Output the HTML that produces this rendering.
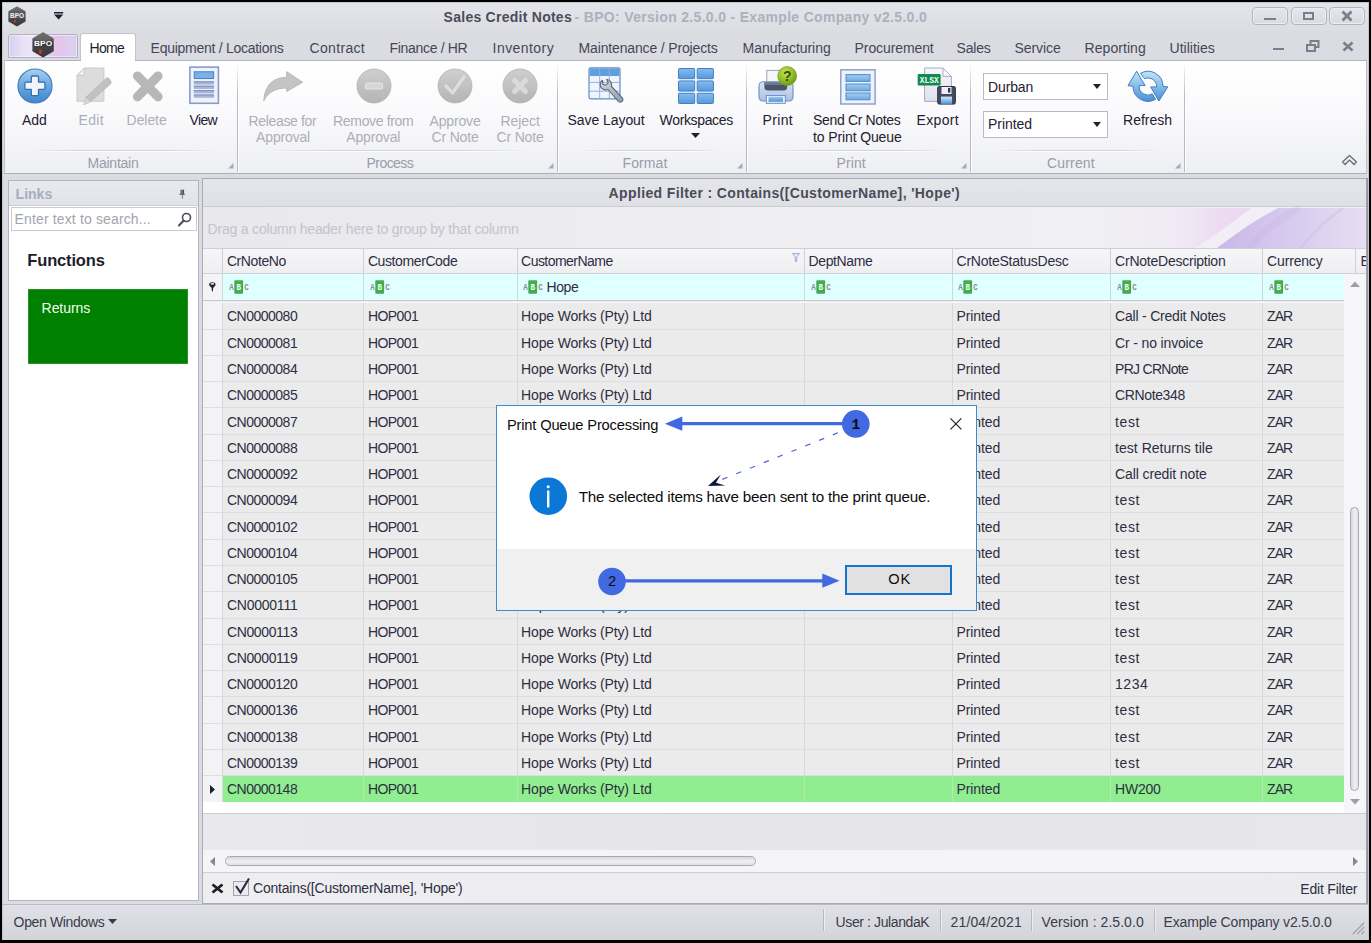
<!DOCTYPE html>
<html lang="en"><head><meta charset="utf-8"><title>Sales Credit Notes</title>
<style>
html,body{margin:0;padding:0;}
body{width:1371px;height:943px;background:#000;overflow:hidden;position:relative;font-family:"Liberation Sans",sans-serif;}
.t{position:absolute;white-space:nowrap;}
.b{position:absolute;box-sizing:border-box;}
svg{position:absolute;overflow:visible;}
</style></head><body>
<div class="b" style="left:2px;top:2px;width:1366.5px;height:938.2px;background:#dbdce2;"></div>
<div class="b" style="left:2px;top:2px;width:1366.5px;height:31px;background:linear-gradient(#e4e5ea,#dcdde3);"></div>
<div class="b" style="left:2px;top:2px;width:1366.5px;height:938.2px;border:1px solid #c4c5cc;"></div>
<div class="t" style="left:443.6px;top:6.5px;height:21px;line-height:21px;font-size:14px;color:#4b4c5a;letter-spacing:0.258px;font-weight:bold;">Sales Credit Notes</div>
<div class="t" style="left:574.6px;top:6.5px;height:21px;line-height:21px;font-size:14px;color:#adb0bd;letter-spacing:0.316px;font-weight:bold;">- BPO: Version 2.5.0.0 - Example Company v2.5.0.0</div>
<svg style="left:7.500px;top:6px" width="18" height="21" viewBox="0 0 18 21"><defs><linearGradient id="hx1" x1="0" y1="0" x2="0" y2="1"><stop offset="0" stop-color="#7a7a7d"/><stop offset="0.450" stop-color="#4b4b4e"/><stop offset="1" stop-color="#3a3a3c"/></linearGradient></defs><polygon points="9,0.300 17.600,5.300 17.600,15.500 9,20.500 0.400,15.500 0.400,5.300" fill="url(#hx1)"/><rect x="1.300" y="8" width="15.400" height="4.200" fill="#5a5a5d"/><text x="9" y="11.900" font-family="Liberation Sans, sans-serif" font-size="6.500" font-weight="bold" fill="#f2f2f4" text-anchor="middle" textLength="14" lengthAdjust="spacingAndGlyphs">BPO</text><rect x="5.800" y="13.800" width="2.200" height="2.600" fill="#c0392b"/></svg>
<svg style="left:53.800px;top:12.400px" width="9.200" height="7.600" viewBox="0 0 9.200 7.600"><rect x="0" y="0" width="9.200" height="1.500" fill="#1f2033"/><polygon points="0,2.500 9.200,2.500 4.600,7.400" fill="#1f2033"/></svg>
<div class="b" style="left:1252px;top:7px;width:36px;height:18px;border:1px solid #b4b5bf;border-radius:4px;background:linear-gradient(#e6e7ec,#d9dae1);box-shadow:inset 0 0 0 1px #ecedf1;"></div>
<div class="b" style="left:1291px;top:7px;width:36px;height:18px;border:1px solid #b4b5bf;border-radius:4px;background:linear-gradient(#e6e7ec,#d9dae1);box-shadow:inset 0 0 0 1px #ecedf1;"></div>
<div class="b" style="left:1329px;top:7px;width:36px;height:18px;border:1px solid #b4b5bf;border-radius:4px;background:linear-gradient(#e6e7ec,#d9dae1);box-shadow:inset 0 0 0 1px #ecedf1;"></div>
<div class="b" style="left:1264px;top:17.8px;width:11.5px;height:2.4px;background:#7b7c8c;"></div>
<div class="b" style="left:1303px;top:11.5px;width:11px;height:8.5px;border:2px solid #7b7c8c;"></div>
<svg style="left:1341px;top:11px" width="12" height="10" viewBox="0 0 12 10"><path d="M1.5,0.5 L10.5,9.5 M10.5,0.5 L1.5,9.5" stroke="#7b7c8c" stroke-width="2.8" fill="none"/></svg>
<div class="b" style="left:3px;top:33px;width:1365px;height:27px;background:#dbdce2;"></div>
<div class="b" style="left:8px;top:33.5px;width:70px;height:24.5px;border:1px solid #b3afc8;border-radius:3px 3px 0 0;background:linear-gradient(90deg,#d7cff0 0%,#e9e2f7 22%,#ece6f8 34%,#e6cdee 62%,#e4c3ec 72%,#dccfee 90%,#d9d0ef 100%);box-shadow:inset 0 0 0 1px rgba(255,255,255,.45);"></div>
<svg style="left:31.500px;top:32.200px" width="22.200" height="25.800" viewBox="0 0 22.200 25.800"><defs><linearGradient id="hx2" x1="0" y1="0" x2="0" y2="1"><stop offset="0" stop-color="#77777a"/><stop offset="0.400" stop-color="#4a4a4d"/><stop offset="1" stop-color="#363638"/></linearGradient></defs><polygon points="11.100,0.300 21.800,6.500 21.800,19.300 11.100,25.500 0.400,19.300 0.400,6.500" fill="url(#hx2)"/><polygon points="11.100,0.300 21.800,6.500 11.100,9.500 0.400,6.500" fill="#6b6b6e" opacity=".7"/><rect x="1.200" y="9.600" width="19.800" height="5" fill="#3c3c3f"/><text x="11.100" y="14.300" font-family="Liberation Sans, sans-serif" font-size="7.500" font-weight="bold" fill="#ffffff" text-anchor="middle" textLength="18" lengthAdjust="spacingAndGlyphs">BPO</text><rect x="7.200" y="17.800" width="2.600" height="4" fill="#c0392b"/></svg>
<div class="b" style="left:80px;top:33.3px;width:56px;height:27.7px;background:#fff;border:1px solid #c3c4cc;border-bottom:none;border-radius:3px 3px 0 0;"></div>
<div class="t" style="left:89.6px;top:37.5px;height:21px;line-height:21px;font-size:14px;color:#1e1e2a;letter-spacing:-0.748px;">Home</div>
<div class="t" style="left:150.6px;top:37.5px;height:21px;line-height:21px;font-size:14px;color:#454658;letter-spacing:-0.272px;">Equipment / Locations</div>
<div class="t" style="left:309.6px;top:37.5px;height:21px;line-height:21px;font-size:14px;color:#454658;letter-spacing:0.313px;">Contract</div>
<div class="t" style="left:389.6px;top:37.5px;height:21px;line-height:21px;font-size:14px;color:#454658;letter-spacing:-0.327px;">Finance / HR</div>
<div class="t" style="left:492.6px;top:37.5px;height:21px;line-height:21px;font-size:14px;color:#454658;letter-spacing:0.439px;">Inventory</div>
<div class="t" style="left:578.6px;top:37.5px;height:21px;line-height:21px;font-size:14px;color:#454658;letter-spacing:-0.157px;">Maintenance / Projects</div>
<div class="t" style="left:742.6px;top:37.5px;height:21px;line-height:21px;font-size:14px;color:#454658;letter-spacing:-0.051px;">Manufacturing</div>
<div class="t" style="left:854.6px;top:37.5px;height:21px;line-height:21px;font-size:14px;color:#454658;letter-spacing:-0.104px;">Procurement</div>
<div class="t" style="left:956.6px;top:37.5px;height:21px;line-height:21px;font-size:14px;color:#454658;letter-spacing:-0.230px;">Sales</div>
<div class="t" style="left:1014.6px;top:37.5px;height:21px;line-height:21px;font-size:14px;color:#454658;letter-spacing:-0.097px;">Service</div>
<div class="t" style="left:1084.6px;top:37.5px;height:21px;line-height:21px;font-size:14px;color:#454658;letter-spacing:0.050px;">Reporting</div>
<div class="t" style="left:1169.6px;top:37.5px;height:21px;line-height:21px;font-size:14px;color:#454658;letter-spacing:-0.002px;">Utilities</div>
<div class="b" style="left:1273px;top:47.8px;width:11px;height:2.2px;background:#7b7c8c;"></div>
<svg style="left:1306px;top:40px" width="14" height="12" viewBox="0 0 14 12"><rect x="4.5" y="1" width="8" height="6" fill="none" stroke="#7b7c8c" stroke-width="2"/><rect x="1" y="5" width="8" height="6" fill="#d9dae0" stroke="#7b7c8c" stroke-width="2"/></svg>
<svg style="left:1342px;top:42px" width="12" height="9" viewBox="0 0 12 9"><path d="M1.5,0.5 L10.5,8.5 M10.5,0.5 L1.5,8.5" stroke="#7b7c8c" stroke-width="2.6" fill="none"/></svg>
<div class="b" style="left:3px;top:903.5px;width:1364.5px;height:36px;background:linear-gradient(#e0e1e6,#d3d4da);border-top:1px solid #b9bac3;"></div>
<div class="t" style="left:13.6px;top:911.5px;height:21px;line-height:21px;font-size:14px;color:#3a3b4a;letter-spacing:-0.348px;">Open Windows</div>
<svg style="left:108px;top:919px" width="9" height="5" viewBox="0 0 9 5"><polygon points="0,0 9,0 4.5,5" fill="#3a3b4a"/></svg>
<div class="b" style="left:823px;top:908.5px;width:1px;height:22.5px;background:#b7b8c2;"></div>
<div class="b" style="left:824px;top:908.5px;width:1px;height:22.5px;background:#eceef2;"></div>
<div class="b" style="left:939.5px;top:908.5px;width:1px;height:22.5px;background:#b7b8c2;"></div>
<div class="b" style="left:940.5px;top:908.5px;width:1px;height:22.5px;background:#eceef2;"></div>
<div class="b" style="left:1031px;top:908.5px;width:1px;height:22.5px;background:#b7b8c2;"></div>
<div class="b" style="left:1032px;top:908.5px;width:1px;height:22.5px;background:#eceef2;"></div>
<div class="b" style="left:1153.5px;top:908.5px;width:1px;height:22.5px;background:#b7b8c2;"></div>
<div class="b" style="left:1154.5px;top:908.5px;width:1px;height:22.5px;background:#eceef2;"></div>
<div class="t" style="left:835.6px;top:911.5px;height:21px;line-height:21px;font-size:14px;color:#3a3b4a;letter-spacing:-0.393px;">User : JulandaK</div>
<div class="t" style="left:950.6px;top:911.5px;height:21px;line-height:21px;font-size:14px;color:#3a3b4a;letter-spacing:0.115px;">21/04/2021</div>
<div class="t" style="left:1041.6px;top:911.5px;height:21px;line-height:21px;font-size:14px;color:#3a3b4a;letter-spacing:0.058px;">Version : 2.5.0.0</div>
<div class="t" style="left:1163.6px;top:911.5px;height:21px;line-height:21px;font-size:14px;color:#3a3b4a;letter-spacing:-0.169px;">Example Company v2.5.0.0</div>
<svg style="left:1351px;top:920.500px" width="14" height="14" viewBox="0 0 16 16"><path d="M2,15 L15,2 M7,15 L15,7 M12,15 L15,12" stroke="#9a9ba6" stroke-width="1.3" fill="none"/></svg>
<div class="b" style="left:4px;top:60px;width:1363px;height:114px;background:linear-gradient(#ffffff 0%,#fafafc 45%,#eeeff3 100%);border:1px solid #bfc0c9;border-top:1px solid #b2b3bc;border-bottom:1px solid #adaeb8;"></div>
<div class="b" style="left:81px;top:60px;width:54px;height:1px;background:#fff;"></div>
<div class="b" style="left:237px;top:62px;width:1px;height:110px;background:linear-gradient(rgba(200,201,210,0),#b9bac4 30%,#b9bac4 100%);"></div>
<div class="b" style="left:238px;top:62px;width:1px;height:110px;background:rgba(255,255,255,.9);"></div>
<div class="b" style="left:557px;top:62px;width:1px;height:110px;background:linear-gradient(rgba(200,201,210,0),#b9bac4 30%,#b9bac4 100%);"></div>
<div class="b" style="left:558px;top:62px;width:1px;height:110px;background:rgba(255,255,255,.9);"></div>
<div class="b" style="left:746px;top:62px;width:1px;height:110px;background:linear-gradient(rgba(200,201,210,0),#b9bac4 30%,#b9bac4 100%);"></div>
<div class="b" style="left:747px;top:62px;width:1px;height:110px;background:rgba(255,255,255,.9);"></div>
<div class="b" style="left:970px;top:62px;width:1px;height:110px;background:linear-gradient(rgba(200,201,210,0),#b9bac4 30%,#b9bac4 100%);"></div>
<div class="b" style="left:971px;top:62px;width:1px;height:110px;background:rgba(255,255,255,.9);"></div>
<div class="b" style="left:1184px;top:62px;width:1px;height:110px;background:linear-gradient(rgba(200,201,210,0),#b9bac4 30%,#b9bac4 100%);"></div>
<div class="b" style="left:1185px;top:62px;width:1px;height:110px;background:rgba(255,255,255,.9);"></div>
<div class="b" style="left:30px;top:150px;width:185px;height:1px;background:linear-gradient(90deg,rgba(210,211,219,0),#d2d3db 25%,#d2d3db 75%,rgba(210,211,219,0));"></div>
<div class="b" style="left:30px;top:151px;width:185px;height:1px;background:linear-gradient(90deg,rgba(255,255,255,0),#fff 25%,#fff 75%,rgba(255,255,255,0));"></div>
<div class="b" style="left:262px;top:150px;width:270px;height:1px;background:linear-gradient(90deg,rgba(210,211,219,0),#d2d3db 25%,#d2d3db 75%,rgba(210,211,219,0));"></div>
<div class="b" style="left:262px;top:151px;width:270px;height:1px;background:linear-gradient(90deg,rgba(255,255,255,0),#fff 25%,#fff 75%,rgba(255,255,255,0));"></div>
<div class="b" style="left:582px;top:150px;width:138px;height:1px;background:linear-gradient(90deg,rgba(210,211,219,0),#d2d3db 25%,#d2d3db 75%,rgba(210,211,219,0));"></div>
<div class="b" style="left:582px;top:151px;width:138px;height:1px;background:linear-gradient(90deg,rgba(255,255,255,0),#fff 25%,#fff 75%,rgba(255,255,255,0));"></div>
<div class="b" style="left:770px;top:150px;width:176px;height:1px;background:linear-gradient(90deg,rgba(210,211,219,0),#d2d3db 25%,#d2d3db 75%,rgba(210,211,219,0));"></div>
<div class="b" style="left:770px;top:151px;width:176px;height:1px;background:linear-gradient(90deg,rgba(255,255,255,0),#fff 25%,#fff 75%,rgba(255,255,255,0));"></div>
<div class="b" style="left:996px;top:150px;width:164px;height:1px;background:linear-gradient(90deg,rgba(210,211,219,0),#d2d3db 25%,#d2d3db 75%,rgba(210,211,219,0));"></div>
<div class="b" style="left:996px;top:151px;width:164px;height:1px;background:linear-gradient(90deg,rgba(255,255,255,0),#fff 25%,#fff 75%,rgba(255,255,255,0));"></div>
<svg style="left:227.5px;top:163.200px" width="5.500" height="5.500" viewBox="0 0 7 7"><polygon points="7,0 7,7 0,7" fill="#a9aab5"/></svg>
<svg style="left:547.5px;top:163.200px" width="5.500" height="5.500" viewBox="0 0 7 7"><polygon points="7,0 7,7 0,7" fill="#a9aab5"/></svg>
<svg style="left:736.5px;top:163.200px" width="5.500" height="5.500" viewBox="0 0 7 7"><polygon points="7,0 7,7 0,7" fill="#a9aab5"/></svg>
<svg style="left:960.5px;top:163.200px" width="5.500" height="5.500" viewBox="0 0 7 7"><polygon points="7,0 7,7 0,7" fill="#a9aab5"/></svg>
<svg style="left:1174.5px;top:163.200px" width="5.500" height="5.500" viewBox="0 0 7 7"><polygon points="7,0 7,7 0,7" fill="#a9aab5"/></svg>
<svg style="left:17.400px;top:68.300px" width="36" height="36" viewBox="0 0 36 36">
<defs><linearGradient id="ga" x1="0" y1="0" x2="0" y2="1"><stop offset="0" stop-color="#a9d0f0"/><stop offset="0.450" stop-color="#6eaae0"/><stop offset="1" stop-color="#3f86cc"/></linearGradient></defs>
<circle cx="18" cy="18" r="17" fill="url(#ga)" stroke="#3d7fc2" stroke-width="1.200"/>
<path d="M14.300,9.200 Q14.300,8 15.500,8 H20.300 Q21.500,8 21.500,9.200 V14.200 H26.700 Q27.900,14.200 27.900,15.400 V20.200 Q27.900,21.400 26.700,21.400 H21.500 V26.400 Q21.500,27.600 20.300,27.600 H15.500 Q14.300,27.600 14.300,26.400 V21.400 H9.100 Q7.900,21.400 7.900,20.200 V15.400 Q7.900,14.200 9.100,14.200 H14.300 Z" fill="#f1f5fb" stroke="#356fae" stroke-width="1.300" stroke-linejoin="round"/>
</svg>
<svg style="left:75px;top:66px" width="37" height="40" viewBox="0 0 37 40">
<path d="M9.500,2 H28.900 V35.300 H2 V9.500 Z" fill="#dcdcdc" stroke="#cacaca" stroke-width="1"/>
<path d="M2,9.500 H9.500 V2 Z" fill="#ededed" stroke="#cacaca" stroke-width="1"/>
<path d="M31.500,12 Q33,11.500 34.300,12.800 L36,15.500 Q36.500,17 35.500,18 L15,36 L8.800,38.700 L10.800,31.500 Z" fill="#c1c1c1" stroke="#b6b6b6" stroke-width="0.800"/>
<path d="M8.800,38.700 L10.800,31.500 L15,36 Z" fill="#d6d6d6"/>
</svg>
<svg style="left:131px;top:70px" width="33" height="33" viewBox="0 0 33 33">
<path d="M6.500,6 L27,26.800 M27,6 L6.500,26.800" fill="none" stroke="#b7b7b7" stroke-width="9.200" stroke-linecap="round"/>
</svg>
<svg style="left:189px;top:66px" width="31" height="39" viewBox="0 0 31 39">
<rect x="0.900" y="1.100" width="28.500" height="36.200" fill="#eef2fb" stroke="#8a9bcb" stroke-width="1.600"/>
<rect x="5.300" y="5.800" width="19.300" height="6.700" fill="#7ab2e6" stroke="#4a86c8" stroke-width="1.100"/>
<g fill="#aab5d8"><rect x="4.800" y="15.300" width="20.300" height="3.300"/><rect x="4.800" y="19.700" width="20.300" height="3.300"/><rect x="4.800" y="24.100" width="20.300" height="3.300"/><rect x="4.800" y="28.500" width="20.300" height="3.300"/></g>
<g fill="#7d8dc0"><rect x="4.800" y="15.300" width="20.300" height="1"/><rect x="4.800" y="19.700" width="20.300" height="1"/><rect x="4.800" y="24.100" width="20.300" height="1"/><rect x="4.800" y="28.500" width="20.300" height="1"/></g>
</svg>
<div class="t" style="left:22.1px;top:110px;height:21px;line-height:21px;font-size:14px;color:#1f2030;letter-spacing:-0.155px;">Add</div>
<div class="t" style="left:78.6px;top:110px;height:21px;line-height:21px;font-size:14px;color:#adaeb8;letter-spacing:0.325px;">Edit</div>
<div class="t" style="left:126.6px;top:110px;height:21px;line-height:21px;font-size:14px;color:#adaeb8;letter-spacing:-0.074px;">Delete</div>
<div class="t" style="left:189.6px;top:110px;height:21px;line-height:21px;font-size:14px;color:#1f2030;letter-spacing:-0.664px;">View</div>
<div class="t" style="left:87.6px;top:152.5px;height:21px;line-height:21px;font-size:14px;color:#9a9cab;letter-spacing:-0.260px;">Maintain</div>
<svg style="left:262px;top:70px" width="43" height="32" viewBox="0 0 43 32">
<path d="M24.700,1.700 L40.600,12.200 L24.700,21.500 L24.700,18 C14,18 6,22 1.800,30.800 C3,14 12,7.500 24.700,7.500 Z" fill="#c4c4c4" stroke="#b9b9b9" stroke-width="1" stroke-linejoin="round"/>
</svg>
<svg style="left:356px;top:68px" width="36" height="36" viewBox="0 0 36 36"><defs><linearGradient id="gdminus" x1="0" y1="0" x2="0" y2="1"><stop offset="0" stop-color="#cfcfcf"/><stop offset="1" stop-color="#b4b4b4"/></linearGradient></defs><circle cx="18" cy="18" r="17" fill="url(#gdminus)" stroke="#b3b3b3" stroke-width="0.800"/><rect x="9.5" y="15" width="17" height="6" rx="1.5" fill="#d6d6d6" stroke="#e3e3e3" stroke-width="1.2"/></svg>
<svg style="left:437px;top:68px" width="36" height="36" viewBox="0 0 36 36"><defs><linearGradient id="gdcheck" x1="0" y1="0" x2="0" y2="1"><stop offset="0" stop-color="#cfcfcf"/><stop offset="1" stop-color="#b4b4b4"/></linearGradient></defs><circle cx="18" cy="18" r="17" fill="url(#gdcheck)" stroke="#b3b3b3" stroke-width="0.800"/><path d="M9,18 L15.500,25 L27,9" fill="none" stroke="#dedede" stroke-width="3.2" stroke-linecap="round" stroke-linejoin="round"/></svg>
<svg style="left:502px;top:68px" width="36" height="36" viewBox="0 0 36 36"><defs><linearGradient id="gdx" x1="0" y1="0" x2="0" y2="1"><stop offset="0" stop-color="#cfcfcf"/><stop offset="1" stop-color="#b4b4b4"/></linearGradient></defs><circle cx="18" cy="18" r="17" fill="url(#gdx)" stroke="#b3b3b3" stroke-width="0.800"/><path d="M12.500,12.500 L23.500,23.500 M23.500,12.500 L12.500,23.500" fill="none" stroke="#dadada" stroke-width="5" stroke-linecap="round"/></svg>
<div class="t" style="left:248.6px;top:110.5px;height:21px;line-height:21px;font-size:14px;color:#adaeb8;letter-spacing:-0.349px;">Release for</div>
<div class="t" style="left:256.1px;top:127px;height:21px;line-height:21px;font-size:14px;color:#adaeb8;letter-spacing:-0.165px;">Approval</div>
<div class="t" style="left:333.1px;top:110.5px;height:21px;line-height:21px;font-size:14px;color:#adaeb8;letter-spacing:-0.342px;">Remove from</div>
<div class="t" style="left:346.3px;top:127px;height:21px;line-height:21px;font-size:14px;color:#adaeb8;letter-spacing:-0.165px;">Approval</div>
<div class="t" style="left:429.6px;top:110.5px;height:21px;line-height:21px;font-size:14px;color:#adaeb8;letter-spacing:-0.174px;">Approve</div>
<div class="t" style="left:431.6px;top:127px;height:21px;line-height:21px;font-size:14px;color:#adaeb8;letter-spacing:-0.189px;">Cr Note</div>
<div class="t" style="left:500.4px;top:110.5px;height:21px;line-height:21px;font-size:14px;color:#adaeb8;letter-spacing:-0.017px;">Reject</div>
<div class="t" style="left:496.6px;top:127px;height:21px;line-height:21px;font-size:14px;color:#adaeb8;letter-spacing:-0.189px;">Cr Note</div>
<div class="t" style="left:366.6px;top:152.5px;height:21px;line-height:21px;font-size:14px;color:#9a9cab;letter-spacing:-0.579px;">Process</div>
<svg style="left:588px;top:67px" width="38" height="38" viewBox="0 0 38 38">
<defs><linearGradient id="gw" x1="0" y1="0" x2="1" y2="1"><stop offset="0" stop-color="#d3dae3"/><stop offset="1" stop-color="#8f9bab"/></linearGradient></defs>
<rect x="1" y="0.800" width="31" height="31" rx="1.800" fill="#f0f5fc" stroke="#5f88c4" stroke-width="1.200"/>
<path d="M1.600,2.600 Q1.600,1.400 2.800,1.400 H30.200 Q31.400,1.400 31.400,2.600 V8.900 H1.600 Z" fill="#5e9fe0"/>
<path d="M1,15.400 H32 M1,24.200 H32 M11.700,1 V31.800 M21.300,1 V31.800" stroke="#8fb0dc" stroke-width="1" fill="none"/>
<path d="M14.600,13.300 C11,15.600 11.400,21.300 16.300,22.600 C17.800,23 19.200,22.800 20,22.500 L30.400,34.300 C32.800,36.800 36.600,33.300 34.300,30.800 L23.500,19.500 C24.300,16.500 22.500,12.600 18.600,12.200 L20.300,15.800 L17.300,18.300 L14.800,16.900 Z" fill="url(#gw)" stroke="#5d6a7c" stroke-width="1.100" stroke-linejoin="round"/>
</svg>
<svg style="left:678px;top:67.900px" width="36" height="36" viewBox="0 0 36 36"><defs><linearGradient id="gc" x1="0" y1="0" x2="0" y2="1"><stop offset="0" stop-color="#86bcec"/><stop offset="1" stop-color="#5899dc"/></linearGradient></defs><rect x="0.5" y="0.5" width="16.200" height="10.200" rx="0.800" fill="url(#gc)" stroke="#3f80c6" stroke-width="1"/><rect x="19.2" y="0.5" width="16.200" height="10.200" rx="0.800" fill="url(#gc)" stroke="#3f80c6" stroke-width="1"/><rect x="0.5" y="12.9" width="16.200" height="10.200" rx="0.800" fill="url(#gc)" stroke="#3f80c6" stroke-width="1"/><rect x="19.2" y="12.9" width="16.200" height="10.200" rx="0.800" fill="url(#gc)" stroke="#3f80c6" stroke-width="1"/><rect x="0.5" y="25.3" width="16.200" height="10.200" rx="0.800" fill="url(#gc)" stroke="#3f80c6" stroke-width="1"/><rect x="19.2" y="25.3" width="16.200" height="10.200" rx="0.800" fill="url(#gc)" stroke="#3f80c6" stroke-width="1"/></svg>
<div class="t" style="left:567.6px;top:110px;height:21px;line-height:21px;font-size:14px;color:#1f2030;letter-spacing:-0.073px;">Save Layout</div>
<div class="t" style="left:659.6px;top:110px;height:21px;line-height:21px;font-size:14px;color:#1f2030;letter-spacing:-0.352px;">Workspaces</div>
<svg style="left:691px;top:133px" width="9" height="5" viewBox="0 0 9 5"><polygon points="0,0 9,0 4.500,5" fill="#20212f"/></svg>
<div class="t" style="left:622.6px;top:152.5px;height:21px;line-height:21px;font-size:14px;color:#9a9cab;letter-spacing:0.092px;">Format</div>
<svg style="left:758px;top:66px" width="41" height="39" viewBox="0 0 41 39">
<defs><linearGradient id="gp" x1="0" y1="0" x2="0" y2="1"><stop offset="0" stop-color="#d8e4f4"/><stop offset="1" stop-color="#a9c1e4"/></linearGradient>
<radialGradient id="gq" cx="40%" cy="32%" r="70%"><stop offset="0" stop-color="#c6e35a"/><stop offset="0.600" stop-color="#8fbf22"/><stop offset="1" stop-color="#6a9a14"/></radialGradient>
<linearGradient id="gpp" x1="0" y1="0" x2="0" y2="1"><stop offset="0" stop-color="#9cc8f0"/><stop offset="1" stop-color="#4e92d8"/></linearGradient></defs>
<rect x="8.800" y="4.400" width="14" height="13" fill="#f4f6fa" stroke="#9aa7bd" stroke-width="1"/>
<rect x="1" y="15.700" width="34" height="19.300" rx="4" fill="url(#gp)" stroke="#6c8dc2" stroke-width="1.100"/>
<path d="M6.400,16.500 H29.200 V21 Q29.200,24.500 25.500,24.500 H10 Q6.400,24.500 6.400,21 Z" fill="#4b5468"/>
<path d="M6.400,16.500 H29.200 V19 H6.400 Z" fill="#6e778b"/>
<rect x="8.300" y="29.600" width="19" height="7.700" fill="#f1f5fb" stroke="#6c8dc2" stroke-width="1"/>
<rect x="10.500" y="30.800" width="14.600" height="5" fill="url(#gpp)"/>
<circle cx="29.200" cy="10" r="9.400" fill="url(#gq)" stroke="#7aa51c" stroke-width="0.800"/>
<text x="29.200" y="15" font-family="Liberation Sans, sans-serif" font-size="14" font-weight="bold" fill="#3c4a12" text-anchor="middle">?</text>
</svg>
<svg style="left:840px;top:68.600px" width="37" height="37" viewBox="0 0 37 37">
<defs><linearGradient id="gs" x1="0" y1="0" x2="0" y2="1"><stop offset="0" stop-color="#a5cdf0"/><stop offset="1" stop-color="#6fa9e2"/></linearGradient></defs>
<rect x="0.800" y="0.800" width="34.300" height="34.200" fill="#eef2fb" stroke="#8a9bcb" stroke-width="1.400"/>
<rect x="6" y="5.600" width="24" height="6.800" fill="url(#gs)" stroke="#4d8ccc" stroke-width="1"/>
<rect x="6" y="15" width="24" height="6.800" fill="url(#gs)" stroke="#4d8ccc" stroke-width="1"/>
<rect x="6" y="24" width="24" height="6.800" fill="url(#gs)" stroke="#4d8ccc" stroke-width="1"/>
</svg>
<svg style="left:916px;top:66px" width="42" height="40" viewBox="0 0 42 40">
<defs><linearGradient id="ge" x1="0" y1="0" x2="0" y2="1"><stop offset="0" stop-color="#f6f7fa"/><stop offset="1" stop-color="#dde1ea"/></linearGradient>
<linearGradient id="gf" x1="0" y1="0" x2="0" y2="1"><stop offset="0" stop-color="#d6e8f8"/><stop offset="1" stop-color="#4f94da"/></linearGradient></defs>
<path d="M8.600,2 H27 L35.400,10.400 V35.400 H8.600 Z" fill="url(#ge)" stroke="#a3adc4" stroke-width="1"/>
<path d="M27,2 V10.400 H35.400 Z" fill="#fff" stroke="#a3adc4" stroke-width="1"/>
<rect x="1.700" y="8.100" width="22.900" height="11.300" rx="1" fill="#0f8a50"/>
<text x="13.200" y="17.300" font-family="Liberation Mono,monospace" font-size="9.500" font-weight="bold" fill="#fff" text-anchor="middle" textLength="19" lengthAdjust="spacingAndGlyphs">XLSX</text>
<rect x="21.700" y="20.500" width="17.700" height="17.600" rx="1.500" fill="#424b5f" stroke="#2e3648" stroke-width="1"/>
<rect x="25.500" y="21" width="10" height="7" fill="#edf0f5"/>
<rect x="32" y="22" width="2.300" height="4.600" fill="#2e3648"/>
<rect x="25" y="30.600" width="11" height="7.300" fill="url(#gf)"/>
</svg>
<div class="t" style="left:762.6px;top:110px;height:21px;line-height:21px;font-size:14px;color:#1f2030;letter-spacing:0.328px;">Print</div>
<div class="t" style="left:813.1px;top:110px;height:21px;line-height:21px;font-size:14px;color:#1f2030;letter-spacing:-0.352px;">Send Cr Notes</div>
<div class="t" style="left:813.1px;top:126.5px;height:21px;line-height:21px;font-size:14px;color:#1f2030;letter-spacing:-0.129px;">to Print Queue</div>
<div class="t" style="left:916.6px;top:110px;height:21px;line-height:21px;font-size:14px;color:#1f2030;letter-spacing:0.328px;">Export</div>
<div class="t" style="left:836.6px;top:152.5px;height:21px;line-height:21px;font-size:14px;color:#9a9cab;letter-spacing:0.078px;">Print</div>
<div class="b" style="left:983px;top:73px;width:125px;height:27px;background:#fff;border:1px solid #b8bac4;"></div>
<div class="b" style="left:983px;top:110.5px;width:125px;height:27px;background:#fff;border:1px solid #b8bac4;"></div>
<svg style="left:1093px;top:84px" width="8" height="5" viewBox="0 0 8 5"><polygon points="0,0 8,0 4,5" fill="#20212f"/></svg>
<svg style="left:1093px;top:121.5px" width="8" height="5" viewBox="0 0 8 5"><polygon points="0,0 8,0 4,5" fill="#20212f"/></svg>
<div class="t" style="left:988.1px;top:76.5px;height:21px;line-height:21px;font-size:14px;color:#1f2030;letter-spacing:-0.163px;">Durban</div>
<div class="t" style="left:988.1px;top:114px;height:21px;line-height:21px;font-size:14px;color:#1f2030;letter-spacing:-0.076px;">Printed</div>
<svg style="left:1127px;top:69px" width="42" height="34" viewBox="0 0 42 34">
<defs><linearGradient id="gr" x1="0" y1="0" x2="0" y2="1"><stop offset="0" stop-color="#c4e2f6"/><stop offset="0.500" stop-color="#86bde8"/><stop offset="1" stop-color="#4a90d4"/></linearGradient></defs>
<path d="M13.500,4.300 A15,15 0 0 1 36,17.300 L40.800,17.900 L31.900,32 L23.700,17.900 L29.800,17.900 A8.800,8.800 0 0 0 17.600,9.700 Z" fill="url(#gr)" stroke="#3f7fc2" stroke-width="1" stroke-linejoin="round"/>
<path d="M28.500,30.300 A15,15 0 0 1 6,17.300 L1,16.600 L9.600,2.200 L18.100,16.600 L12.200,16.600 A8.800,8.800 0 0 0 25.400,24.900 Z" fill="url(#gr)" stroke="#3f7fc2" stroke-width="1" stroke-linejoin="round"/>
</svg>
<div class="t" style="left:1123.1px;top:110.3px;height:21px;line-height:21px;font-size:14px;color:#1f2030;letter-spacing:-0.020px;">Refresh</div>
<div class="t" style="left:1047.1px;top:152.5px;height:21px;line-height:21px;font-size:14px;color:#9a9cab;letter-spacing:0.153px;">Current</div>
<svg style="left:1341px;top:153px" width="17" height="14" viewBox="0 0 17 14"><path d="M1.500,9 L8.500,2.500 L15.500,9 L13,11.500 L8.500,7 L4,11.500 Z" fill="none" stroke="#6b6c7a" stroke-width="1.300" stroke-linejoin="round"/></svg>
<div class="b" style="left:8px;top:180px;width:191px;height:721px;background:#fff;border:1px solid #b3b4be;"></div>
<div class="b" style="left:9px;top:181px;width:189px;height:24.5px;background:linear-gradient(#e9eaee,#e2e3e8);border-bottom:1px solid #cfd0d7;"></div>
<div class="t" style="left:15.6px;top:183.5px;height:21px;line-height:21px;font-size:14px;color:#a5adc3;letter-spacing:0.009px;font-weight:bold;">Links</div>
<svg style="left:178px;top:189.300px" width="8.500" height="9.600" viewBox="0 0 11 13"><path d="M3,1 H8 V6 L10,8 H1 L3,6 Z" fill="#6f7080"/><rect x="5" y="8" width="1.300" height="5" fill="#6f7080"/><rect x="6.300" y="1" width="1.500" height="6" fill="#50515f"/></svg>
<div class="b" style="left:10.5px;top:207px;width:186px;height:23.5px;background:#fff;border:1px solid #c9cad2;"></div>
<div class="t" style="left:14.6px;top:209.3px;height:21px;line-height:21px;font-size:14px;color:#a3a4ae;letter-spacing:0.138px;">Enter text to search...</div>
<svg style="left:178px;top:212px" width="14" height="15" viewBox="0 0 14 15"><circle cx="8.500" cy="5.500" r="4" fill="none" stroke="#4b4c5a" stroke-width="1.600"/><path d="M5.700,8.500 L1,13.500" stroke="#4b4c5a" stroke-width="2" stroke-linecap="round"/></svg>
<div class="t" style="left:27.3px;top:248px;height:24px;line-height:24px;font-size:16.5px;color:#1d1e2b;letter-spacing:-0.153px;font-weight:bold;">Functions</div>
<div class="b" style="left:28px;top:289px;width:160px;height:75px;background:#008000;border:1px solid #2c8f2c;"></div>
<div class="t" style="left:41.6px;top:298px;height:21px;line-height:21px;font-size:14px;color:#f2fff2;letter-spacing:-0.070px;">Returns</div>
<div class="b" style="left:201.8px;top:178.4px;width:1165.7px;height:725.2px;background:#ececef;border:1px solid #a9abb6;"></div>
<div class="b" style="left:1365.8px;top:178.4px;width:2.7px;height:725.2px;background:linear-gradient(90deg,#a3a5b2,#8f91a0);"></div>
<div class="b" style="left:202.8px;top:179.4px;width:1163.7px;height:28px;background:linear-gradient(#e5e6ea,#dfe0e5);border-bottom:1px solid #cbccd3;"></div>
<div class="t" style="left:608.6px;top:183px;height:21px;line-height:21px;font-size:14px;color:#4a4b5a;letter-spacing:0.370px;font-weight:bold;">Applied Filter : Contains([CustomerName], 'Hope')</div>
<div class="b" style="left:203px;top:207px;width:1163px;height:42px;background:linear-gradient(90deg,#e9e9ed 0%,#efeff2 50%,#f1f0f4 100%);"></div>
<svg style="left:1100px;top:207.500px" width="266" height="41" viewBox="0 0 266 41">
<defs><linearGradient id="swp" x1="0" y1="0" x2="1" y2="0"><stop offset="0" stop-color="#edddf2" stop-opacity="0"/><stop offset="0.450" stop-color="#eee0f3" stop-opacity=".3"/><stop offset="0.800" stop-color="#ecdbf2" stop-opacity="1"/><stop offset="1" stop-color="#ead8f1" stop-opacity="1"/></linearGradient>
<linearGradient id="swl" x1="0" y1="0" x2="1" y2="0"><stop offset="0" stop-color="#c9b7e8"/><stop offset="0.350" stop-color="#d3c5ec"/><stop offset="1" stop-color="#e6def3"/></linearGradient></defs>
<path d="M0,0 H152 C135,12 115,28 94,41 H0 Z" fill="url(#swp)"/>
<path d="M152,0 H178 C150,15 130,30 116,41 H94 C115,28 135,12 152,0 Z" fill="#f1eff5"/>
<path d="M178,0 C150,15 130,30 116,41 H266 V0 Z" fill="url(#swl)"/>
<path d="M243,0 C225,12 212,26 200,41" stroke="#c7b5e6" stroke-width="2.500" fill="none" opacity=".35"/>
<path d="M200,0 C180,10 160,26 148,41" stroke="#c2aee4" stroke-width="7" fill="none" opacity=".22"/>
</svg>
<div class="t" style="left:207.6px;top:219px;height:21px;line-height:21px;font-size:14px;color:#c2c3cc;letter-spacing:-0.199px;">Drag a column header here to group by that column</div>
<div class="b" style="left:203px;top:247.7px;width:1163px;height:26.5px;background:linear-gradient(#f6f6f8,#efeff2);border-top:1px solid #cfd0d6;border-bottom:1px solid #cfd0d6;"></div>
<div class="b" style="left:222px;top:248.7px;width:1px;height:24.5px;background:#d0d1d8;"></div>
<div class="b" style="left:363px;top:248.7px;width:1px;height:24.5px;background:#d0d1d8;"></div>
<div class="b" style="left:516.5px;top:248.7px;width:1px;height:24.5px;background:#d0d1d8;"></div>
<div class="b" style="left:804px;top:248.7px;width:1px;height:24.5px;background:#d0d1d8;"></div>
<div class="b" style="left:951.5px;top:248.7px;width:1px;height:24.5px;background:#d0d1d8;"></div>
<div class="b" style="left:1110px;top:248.7px;width:1px;height:24.5px;background:#d0d1d8;"></div>
<div class="b" style="left:1262px;top:248.7px;width:1px;height:24.5px;background:#d0d1d8;"></div>
<div class="b" style="left:1355px;top:248.7px;width:1px;height:24.5px;background:#d0d1d8;"></div>
<div class="t" style="left:226.9px;top:250.6px;height:21px;line-height:21px;font-size:14px;color:#2d2e42;letter-spacing:-0.406px;">CrNoteNo</div>
<div class="t" style="left:367.9px;top:250.6px;height:21px;line-height:21px;font-size:14px;color:#2d2e42;letter-spacing:-0.396px;">CustomerCode</div>
<div class="t" style="left:521.1px;top:250.6px;height:21px;line-height:21px;font-size:14px;color:#2d2e42;letter-spacing:-0.539px;">CustomerName</div>
<div class="t" style="left:808.6px;top:250.6px;height:21px;line-height:21px;font-size:14px;color:#2d2e42;letter-spacing:-0.402px;">DeptName</div>
<div class="t" style="left:956.6px;top:250.6px;height:21px;line-height:21px;font-size:14px;color:#2d2e42;letter-spacing:-0.255px;">CrNoteStatusDesc</div>
<div class="t" style="left:1115.1px;top:250.6px;height:21px;line-height:21px;font-size:14px;color:#2d2e42;letter-spacing:-0.236px;">CrNoteDescription</div>
<div class="t" style="left:1267.1px;top:250.6px;height:21px;line-height:21px;font-size:14px;color:#2d2e42;letter-spacing:-0.170px;">Currency</div>
<div class="t" style="left:1360.5px;top:250.6px;height:21px;line-height:21px;font-size:14px;color:#2d2e42;width:5px;overflow:hidden;">E</div>
<svg style="left:792px;top:253px" width="8" height="9" viewBox="0 0 8 9"><path d="M0.500,0.500 H7.500 L4.700,4 V8.500 H3.300 V4 Z" fill="#e3ebf6" stroke="#92a8cf" stroke-width="0.900"/></svg>
<div class="b" style="left:203px;top:274.2px;width:1141px;height:25.5px;background:#e0ffff;"></div>
<div class="b" style="left:203px;top:274.2px;width:19.5px;height:25.5px;background:#f4f4f6;"></div>
<div class="b" style="left:222px;top:274.2px;width:1px;height:25.5px;background:#cfd6dc;"></div>
<div class="b" style="left:363px;top:274.2px;width:1px;height:25.5px;background:#cfd6dc;"></div>
<div class="b" style="left:516.5px;top:274.2px;width:1px;height:25.5px;background:#cfd6dc;"></div>
<div class="b" style="left:804px;top:274.2px;width:1px;height:25.5px;background:#cfd6dc;"></div>
<div class="b" style="left:951.5px;top:274.2px;width:1px;height:25.5px;background:#cfd6dc;"></div>
<div class="b" style="left:1110px;top:274.2px;width:1px;height:25.5px;background:#cfd6dc;"></div>
<div class="b" style="left:1262px;top:274.2px;width:1px;height:25.5px;background:#cfd6dc;"></div>
<div class="b" style="left:203px;top:299.7px;width:1141px;height:1.8px;background:#c9cad1;"></div>
<div class="b" style="left:203px;top:301.5px;width:1141px;height:1.8px;background:#f8f8fa;"></div>
<svg style="left:208.700px;top:282.400px" width="6.700" height="9.800" viewBox="0 0 6.700 9.800"><path d="M0.100,2.300 C0.100,-0.500 6.600,-0.500 6.600,2.300 C6.600,4 4.500,5 4.100,6.200 L3.900,9.700 L2.800,8.800 L2.700,6.200 C2.300,5 0.100,4 0.100,2.300 Z" fill="#1e1e2c"/><ellipse cx="3.350" cy="1.900" rx="2" ry="0.800" fill="#e9e9ee"/></svg>
<svg style="left:229px;top:280px" width="21" height="14" viewBox="0 0 21 14"><rect x="5.300" y="0.300" width="8.800" height="13.400" rx="1" fill="#3fae4b"/><text x="0.300" y="10" font-family="Liberation Mono,monospace" font-size="8.500" font-weight="bold" fill="#8a8a8a" textLength="4.500" lengthAdjust="spacingAndGlyphs">A</text><text x="7.400" y="10" font-family="Liberation Mono,monospace" font-size="8.500" font-weight="bold" fill="#fff" textLength="4.500" lengthAdjust="spacingAndGlyphs">B</text><text x="15.200" y="10" font-family="Liberation Mono,monospace" font-size="8.500" font-weight="bold" fill="#8a8a8a" textLength="4.500" lengthAdjust="spacingAndGlyphs">C</text></svg>
<svg style="left:370px;top:280px" width="21" height="14" viewBox="0 0 21 14"><rect x="5.300" y="0.300" width="8.800" height="13.400" rx="1" fill="#3fae4b"/><text x="0.300" y="10" font-family="Liberation Mono,monospace" font-size="8.500" font-weight="bold" fill="#8a8a8a" textLength="4.500" lengthAdjust="spacingAndGlyphs">A</text><text x="7.400" y="10" font-family="Liberation Mono,monospace" font-size="8.500" font-weight="bold" fill="#fff" textLength="4.500" lengthAdjust="spacingAndGlyphs">B</text><text x="15.200" y="10" font-family="Liberation Mono,monospace" font-size="8.500" font-weight="bold" fill="#8a8a8a" textLength="4.500" lengthAdjust="spacingAndGlyphs">C</text></svg>
<svg style="left:523px;top:280px" width="21" height="14" viewBox="0 0 21 14"><rect x="5.300" y="0.300" width="8.800" height="13.400" rx="1" fill="#3fae4b"/><text x="0.300" y="10" font-family="Liberation Mono,monospace" font-size="8.500" font-weight="bold" fill="#8a8a8a" textLength="4.500" lengthAdjust="spacingAndGlyphs">A</text><text x="7.400" y="10" font-family="Liberation Mono,monospace" font-size="8.500" font-weight="bold" fill="#fff" textLength="4.500" lengthAdjust="spacingAndGlyphs">B</text><text x="15.200" y="10" font-family="Liberation Mono,monospace" font-size="8.500" font-weight="bold" fill="#8a8a8a" textLength="4.500" lengthAdjust="spacingAndGlyphs">C</text></svg>
<svg style="left:810.5px;top:280px" width="21" height="14" viewBox="0 0 21 14"><rect x="5.300" y="0.300" width="8.800" height="13.400" rx="1" fill="#3fae4b"/><text x="0.300" y="10" font-family="Liberation Mono,monospace" font-size="8.500" font-weight="bold" fill="#8a8a8a" textLength="4.500" lengthAdjust="spacingAndGlyphs">A</text><text x="7.400" y="10" font-family="Liberation Mono,monospace" font-size="8.500" font-weight="bold" fill="#fff" textLength="4.500" lengthAdjust="spacingAndGlyphs">B</text><text x="15.200" y="10" font-family="Liberation Mono,monospace" font-size="8.500" font-weight="bold" fill="#8a8a8a" textLength="4.500" lengthAdjust="spacingAndGlyphs">C</text></svg>
<svg style="left:958px;top:280px" width="21" height="14" viewBox="0 0 21 14"><rect x="5.300" y="0.300" width="8.800" height="13.400" rx="1" fill="#3fae4b"/><text x="0.300" y="10" font-family="Liberation Mono,monospace" font-size="8.500" font-weight="bold" fill="#8a8a8a" textLength="4.500" lengthAdjust="spacingAndGlyphs">A</text><text x="7.400" y="10" font-family="Liberation Mono,monospace" font-size="8.500" font-weight="bold" fill="#fff" textLength="4.500" lengthAdjust="spacingAndGlyphs">B</text><text x="15.200" y="10" font-family="Liberation Mono,monospace" font-size="8.500" font-weight="bold" fill="#8a8a8a" textLength="4.500" lengthAdjust="spacingAndGlyphs">C</text></svg>
<svg style="left:1116.5px;top:280px" width="21" height="14" viewBox="0 0 21 14"><rect x="5.300" y="0.300" width="8.800" height="13.400" rx="1" fill="#3fae4b"/><text x="0.300" y="10" font-family="Liberation Mono,monospace" font-size="8.500" font-weight="bold" fill="#8a8a8a" textLength="4.500" lengthAdjust="spacingAndGlyphs">A</text><text x="7.400" y="10" font-family="Liberation Mono,monospace" font-size="8.500" font-weight="bold" fill="#fff" textLength="4.500" lengthAdjust="spacingAndGlyphs">B</text><text x="15.200" y="10" font-family="Liberation Mono,monospace" font-size="8.500" font-weight="bold" fill="#8a8a8a" textLength="4.500" lengthAdjust="spacingAndGlyphs">C</text></svg>
<svg style="left:1268.5px;top:280px" width="21" height="14" viewBox="0 0 21 14"><rect x="5.300" y="0.300" width="8.800" height="13.400" rx="1" fill="#3fae4b"/><text x="0.300" y="10" font-family="Liberation Mono,monospace" font-size="8.500" font-weight="bold" fill="#8a8a8a" textLength="4.500" lengthAdjust="spacingAndGlyphs">A</text><text x="7.400" y="10" font-family="Liberation Mono,monospace" font-size="8.500" font-weight="bold" fill="#fff" textLength="4.500" lengthAdjust="spacingAndGlyphs">B</text><text x="15.200" y="10" font-family="Liberation Mono,monospace" font-size="8.500" font-weight="bold" fill="#8a8a8a" textLength="4.500" lengthAdjust="spacingAndGlyphs">C</text></svg>
<div class="t" style="left:546.6px;top:276.7px;height:21px;line-height:21px;font-size:14px;color:#2d2e42;letter-spacing:-0.456px;">Hope</div>
<div class="b" style="left:1344px;top:273.5px;width:22px;height:539px;background:#f6f6f8;"></div>
<svg style="left:1350px;top:281px" width="10" height="6" viewBox="0 0 10 6"><polygon points="0,6 10,6 5,0.500" fill="#9d9eaa"/></svg>
<svg style="left:1350px;top:799px" width="10" height="6" viewBox="0 0 10 6"><polygon points="0,0 10,0 5,5.500" fill="#9d9eaa"/></svg>
<div class="b" style="left:1350px;top:506.5px;width:9px;height:284px;border:1px solid #a9aab6;border-radius:4.500px;background:linear-gradient(90deg,#d4d5dc,#f0f0f4 55%,#dedfe5);"></div>
<div class="b" style="left:203px;top:303.3px;width:1141px;height:26.47px;background:#ebebeb;"></div>
<div class="b" style="left:203px;top:303.3px;width:19.5px;height:26.47px;background:#f3f3f5;"></div>
<div class="b" style="left:203px;top:328.57px;width:1141px;height:1px;background:#dddde2;"></div>
<div class="b" style="left:222px;top:303.3px;width:1px;height:26.27px;background:#d9d9de;"></div>
<div class="b" style="left:363px;top:303.3px;width:1px;height:26.27px;background:#d9d9de;"></div>
<div class="b" style="left:516.5px;top:303.3px;width:1px;height:26.27px;background:#d9d9de;"></div>
<div class="b" style="left:804px;top:303.3px;width:1px;height:26.27px;background:#d9d9de;"></div>
<div class="b" style="left:951.5px;top:303.3px;width:1px;height:26.27px;background:#d9d9de;"></div>
<div class="b" style="left:1110px;top:303.3px;width:1px;height:26.27px;background:#d9d9de;"></div>
<div class="b" style="left:1262px;top:303.3px;width:1px;height:26.27px;background:#d9d9de;"></div>
<div class="t" style="left:226.9px;top:306.435px;height:21px;line-height:21px;font-size:14px;color:#2d2e42;letter-spacing:-0.490px;">CN0000080</div>
<div class="t" style="left:367.9px;top:306.435px;height:21px;line-height:21px;font-size:14px;color:#2d2e42;letter-spacing:-0.579px;">HOP001</div>
<div class="t" style="left:521.1px;top:306.435px;height:21px;line-height:21px;font-size:14px;color:#2d2e42;letter-spacing:-0.156px;">Hope Works (Pty) Ltd</div>
<div class="t" style="left:956.6px;top:306.435px;height:21px;line-height:21px;font-size:14px;color:#2d2e42;letter-spacing:-0.126px;">Printed</div>
<div class="t" style="left:1115.1px;top:306.435px;height:21px;line-height:21px;font-size:14px;color:#2d2e42;letter-spacing:-0.209px;">Call - Credit Notes</div>
<div class="t" style="left:1267.1px;top:306.435px;height:21px;line-height:21px;font-size:14px;color:#2d2e42;letter-spacing:-0.950px;">ZAR</div>
<div class="b" style="left:203px;top:329.57px;width:1141px;height:26.47px;background:#ebebeb;"></div>
<div class="b" style="left:203px;top:329.57px;width:19.5px;height:26.47px;background:#f3f3f5;"></div>
<div class="b" style="left:203px;top:354.84px;width:1141px;height:1px;background:#dddde2;"></div>
<div class="b" style="left:222px;top:329.57px;width:1px;height:26.27px;background:#d9d9de;"></div>
<div class="b" style="left:363px;top:329.57px;width:1px;height:26.27px;background:#d9d9de;"></div>
<div class="b" style="left:516.5px;top:329.57px;width:1px;height:26.27px;background:#d9d9de;"></div>
<div class="b" style="left:804px;top:329.57px;width:1px;height:26.27px;background:#d9d9de;"></div>
<div class="b" style="left:951.5px;top:329.57px;width:1px;height:26.27px;background:#d9d9de;"></div>
<div class="b" style="left:1110px;top:329.57px;width:1px;height:26.27px;background:#d9d9de;"></div>
<div class="b" style="left:1262px;top:329.57px;width:1px;height:26.27px;background:#d9d9de;"></div>
<div class="t" style="left:226.9px;top:332.705px;height:21px;line-height:21px;font-size:14px;color:#2d2e42;letter-spacing:-0.490px;">CN0000081</div>
<div class="t" style="left:367.9px;top:332.705px;height:21px;line-height:21px;font-size:14px;color:#2d2e42;letter-spacing:-0.579px;">HOP001</div>
<div class="t" style="left:521.1px;top:332.705px;height:21px;line-height:21px;font-size:14px;color:#2d2e42;letter-spacing:-0.156px;">Hope Works (Pty) Ltd</div>
<div class="t" style="left:956.6px;top:332.705px;height:21px;line-height:21px;font-size:14px;color:#2d2e42;letter-spacing:-0.126px;">Printed</div>
<div class="t" style="left:1115.1px;top:332.705px;height:21px;line-height:21px;font-size:14px;color:#2d2e42;letter-spacing:-0.154px;">Cr - no invoice</div>
<div class="t" style="left:1267.1px;top:332.705px;height:21px;line-height:21px;font-size:14px;color:#2d2e42;letter-spacing:-0.950px;">ZAR</div>
<div class="b" style="left:203px;top:355.84px;width:1141px;height:26.47px;background:#ebebeb;"></div>
<div class="b" style="left:203px;top:355.84px;width:19.5px;height:26.47px;background:#f3f3f5;"></div>
<div class="b" style="left:203px;top:381.11px;width:1141px;height:1px;background:#dddde2;"></div>
<div class="b" style="left:222px;top:355.84px;width:1px;height:26.27px;background:#d9d9de;"></div>
<div class="b" style="left:363px;top:355.84px;width:1px;height:26.27px;background:#d9d9de;"></div>
<div class="b" style="left:516.5px;top:355.84px;width:1px;height:26.27px;background:#d9d9de;"></div>
<div class="b" style="left:804px;top:355.84px;width:1px;height:26.27px;background:#d9d9de;"></div>
<div class="b" style="left:951.5px;top:355.84px;width:1px;height:26.27px;background:#d9d9de;"></div>
<div class="b" style="left:1110px;top:355.84px;width:1px;height:26.27px;background:#d9d9de;"></div>
<div class="b" style="left:1262px;top:355.84px;width:1px;height:26.27px;background:#d9d9de;"></div>
<div class="t" style="left:226.9px;top:358.975px;height:21px;line-height:21px;font-size:14px;color:#2d2e42;letter-spacing:-0.490px;">CN0000084</div>
<div class="t" style="left:367.9px;top:358.975px;height:21px;line-height:21px;font-size:14px;color:#2d2e42;letter-spacing:-0.579px;">HOP001</div>
<div class="t" style="left:521.1px;top:358.975px;height:21px;line-height:21px;font-size:14px;color:#2d2e42;letter-spacing:-0.156px;">Hope Works (Pty) Ltd</div>
<div class="t" style="left:956.6px;top:358.975px;height:21px;line-height:21px;font-size:14px;color:#2d2e42;letter-spacing:-0.126px;">Printed</div>
<div class="t" style="left:1115.1px;top:358.975px;height:21px;line-height:21px;font-size:14px;color:#2d2e42;letter-spacing:-0.726px;">PRJ CRNote</div>
<div class="t" style="left:1267.1px;top:358.975px;height:21px;line-height:21px;font-size:14px;color:#2d2e42;letter-spacing:-0.950px;">ZAR</div>
<div class="b" style="left:203px;top:382.11px;width:1141px;height:26.47px;background:#ebebeb;"></div>
<div class="b" style="left:203px;top:382.11px;width:19.5px;height:26.47px;background:#f3f3f5;"></div>
<div class="b" style="left:203px;top:407.38px;width:1141px;height:1px;background:#dddde2;"></div>
<div class="b" style="left:222px;top:382.11px;width:1px;height:26.27px;background:#d9d9de;"></div>
<div class="b" style="left:363px;top:382.11px;width:1px;height:26.27px;background:#d9d9de;"></div>
<div class="b" style="left:516.5px;top:382.11px;width:1px;height:26.27px;background:#d9d9de;"></div>
<div class="b" style="left:804px;top:382.11px;width:1px;height:26.27px;background:#d9d9de;"></div>
<div class="b" style="left:951.5px;top:382.11px;width:1px;height:26.27px;background:#d9d9de;"></div>
<div class="b" style="left:1110px;top:382.11px;width:1px;height:26.27px;background:#d9d9de;"></div>
<div class="b" style="left:1262px;top:382.11px;width:1px;height:26.27px;background:#d9d9de;"></div>
<div class="t" style="left:226.9px;top:385.245px;height:21px;line-height:21px;font-size:14px;color:#2d2e42;letter-spacing:-0.490px;">CN0000085</div>
<div class="t" style="left:367.9px;top:385.245px;height:21px;line-height:21px;font-size:14px;color:#2d2e42;letter-spacing:-0.579px;">HOP001</div>
<div class="t" style="left:521.1px;top:385.245px;height:21px;line-height:21px;font-size:14px;color:#2d2e42;letter-spacing:-0.156px;">Hope Works (Pty) Ltd</div>
<div class="t" style="left:956.6px;top:385.245px;height:21px;line-height:21px;font-size:14px;color:#2d2e42;letter-spacing:-0.126px;">Printed</div>
<div class="t" style="left:1115.1px;top:385.245px;height:21px;line-height:21px;font-size:14px;color:#2d2e42;letter-spacing:-0.381px;">CRNote348</div>
<div class="t" style="left:1267.1px;top:385.245px;height:21px;line-height:21px;font-size:14px;color:#2d2e42;letter-spacing:-0.950px;">ZAR</div>
<div class="b" style="left:203px;top:408.38px;width:1141px;height:26.47px;background:#ebebeb;"></div>
<div class="b" style="left:203px;top:408.38px;width:19.5px;height:26.47px;background:#f3f3f5;"></div>
<div class="b" style="left:203px;top:433.65px;width:1141px;height:1px;background:#dddde2;"></div>
<div class="b" style="left:222px;top:408.38px;width:1px;height:26.27px;background:#d9d9de;"></div>
<div class="b" style="left:363px;top:408.38px;width:1px;height:26.27px;background:#d9d9de;"></div>
<div class="b" style="left:516.5px;top:408.38px;width:1px;height:26.27px;background:#d9d9de;"></div>
<div class="b" style="left:804px;top:408.38px;width:1px;height:26.27px;background:#d9d9de;"></div>
<div class="b" style="left:951.5px;top:408.38px;width:1px;height:26.27px;background:#d9d9de;"></div>
<div class="b" style="left:1110px;top:408.38px;width:1px;height:26.27px;background:#d9d9de;"></div>
<div class="b" style="left:1262px;top:408.38px;width:1px;height:26.27px;background:#d9d9de;"></div>
<div class="t" style="left:226.9px;top:411.515px;height:21px;line-height:21px;font-size:14px;color:#2d2e42;letter-spacing:-0.490px;">CN0000087</div>
<div class="t" style="left:367.9px;top:411.515px;height:21px;line-height:21px;font-size:14px;color:#2d2e42;letter-spacing:-0.579px;">HOP001</div>
<div class="t" style="left:521.1px;top:411.515px;height:21px;line-height:21px;font-size:14px;color:#2d2e42;letter-spacing:-0.156px;">Hope Works (Pty) Ltd</div>
<div class="t" style="left:956.6px;top:411.515px;height:21px;line-height:21px;font-size:14px;color:#2d2e42;letter-spacing:-0.126px;">Printed</div>
<div class="t" style="left:1115.1px;top:411.515px;height:21px;line-height:21px;font-size:14px;color:#2d2e42;letter-spacing:0.612px;">test</div>
<div class="t" style="left:1267.1px;top:411.515px;height:21px;line-height:21px;font-size:14px;color:#2d2e42;letter-spacing:-0.950px;">ZAR</div>
<div class="b" style="left:203px;top:434.65px;width:1141px;height:26.47px;background:#ebebeb;"></div>
<div class="b" style="left:203px;top:434.65px;width:19.5px;height:26.47px;background:#f3f3f5;"></div>
<div class="b" style="left:203px;top:459.92px;width:1141px;height:1px;background:#dddde2;"></div>
<div class="b" style="left:222px;top:434.65px;width:1px;height:26.27px;background:#d9d9de;"></div>
<div class="b" style="left:363px;top:434.65px;width:1px;height:26.27px;background:#d9d9de;"></div>
<div class="b" style="left:516.5px;top:434.65px;width:1px;height:26.27px;background:#d9d9de;"></div>
<div class="b" style="left:804px;top:434.65px;width:1px;height:26.27px;background:#d9d9de;"></div>
<div class="b" style="left:951.5px;top:434.65px;width:1px;height:26.27px;background:#d9d9de;"></div>
<div class="b" style="left:1110px;top:434.65px;width:1px;height:26.27px;background:#d9d9de;"></div>
<div class="b" style="left:1262px;top:434.65px;width:1px;height:26.27px;background:#d9d9de;"></div>
<div class="t" style="left:226.9px;top:437.785px;height:21px;line-height:21px;font-size:14px;color:#2d2e42;letter-spacing:-0.490px;">CN0000088</div>
<div class="t" style="left:367.9px;top:437.785px;height:21px;line-height:21px;font-size:14px;color:#2d2e42;letter-spacing:-0.579px;">HOP001</div>
<div class="t" style="left:521.1px;top:437.785px;height:21px;line-height:21px;font-size:14px;color:#2d2e42;letter-spacing:-0.156px;">Hope Works (Pty) Ltd</div>
<div class="t" style="left:956.6px;top:437.785px;height:21px;line-height:21px;font-size:14px;color:#2d2e42;letter-spacing:-0.126px;">Printed</div>
<div class="t" style="left:1115.1px;top:437.785px;height:21px;line-height:21px;font-size:14px;color:#2d2e42;letter-spacing:0.021px;">test Returns tile</div>
<div class="t" style="left:1267.1px;top:437.785px;height:21px;line-height:21px;font-size:14px;color:#2d2e42;letter-spacing:-0.950px;">ZAR</div>
<div class="b" style="left:203px;top:460.92px;width:1141px;height:26.47px;background:#ebebeb;"></div>
<div class="b" style="left:203px;top:460.92px;width:19.5px;height:26.47px;background:#f3f3f5;"></div>
<div class="b" style="left:203px;top:486.19px;width:1141px;height:1px;background:#dddde2;"></div>
<div class="b" style="left:222px;top:460.92px;width:1px;height:26.27px;background:#d9d9de;"></div>
<div class="b" style="left:363px;top:460.92px;width:1px;height:26.27px;background:#d9d9de;"></div>
<div class="b" style="left:516.5px;top:460.92px;width:1px;height:26.27px;background:#d9d9de;"></div>
<div class="b" style="left:804px;top:460.92px;width:1px;height:26.27px;background:#d9d9de;"></div>
<div class="b" style="left:951.5px;top:460.92px;width:1px;height:26.27px;background:#d9d9de;"></div>
<div class="b" style="left:1110px;top:460.92px;width:1px;height:26.27px;background:#d9d9de;"></div>
<div class="b" style="left:1262px;top:460.92px;width:1px;height:26.27px;background:#d9d9de;"></div>
<div class="t" style="left:226.9px;top:464.055px;height:21px;line-height:21px;font-size:14px;color:#2d2e42;letter-spacing:-0.490px;">CN0000092</div>
<div class="t" style="left:367.9px;top:464.055px;height:21px;line-height:21px;font-size:14px;color:#2d2e42;letter-spacing:-0.579px;">HOP001</div>
<div class="t" style="left:521.1px;top:464.055px;height:21px;line-height:21px;font-size:14px;color:#2d2e42;letter-spacing:-0.156px;">Hope Works (Pty) Ltd</div>
<div class="t" style="left:956.6px;top:464.055px;height:21px;line-height:21px;font-size:14px;color:#2d2e42;letter-spacing:-0.126px;">Printed</div>
<div class="t" style="left:1115.1px;top:464.055px;height:21px;line-height:21px;font-size:14px;color:#2d2e42;letter-spacing:-0.119px;">Call credit note</div>
<div class="t" style="left:1267.1px;top:464.055px;height:21px;line-height:21px;font-size:14px;color:#2d2e42;letter-spacing:-0.950px;">ZAR</div>
<div class="b" style="left:203px;top:487.19px;width:1141px;height:26.47px;background:#ebebeb;"></div>
<div class="b" style="left:203px;top:487.19px;width:19.5px;height:26.47px;background:#f3f3f5;"></div>
<div class="b" style="left:203px;top:512.46px;width:1141px;height:1px;background:#dddde2;"></div>
<div class="b" style="left:222px;top:487.19px;width:1px;height:26.27px;background:#d9d9de;"></div>
<div class="b" style="left:363px;top:487.19px;width:1px;height:26.27px;background:#d9d9de;"></div>
<div class="b" style="left:516.5px;top:487.19px;width:1px;height:26.27px;background:#d9d9de;"></div>
<div class="b" style="left:804px;top:487.19px;width:1px;height:26.27px;background:#d9d9de;"></div>
<div class="b" style="left:951.5px;top:487.19px;width:1px;height:26.27px;background:#d9d9de;"></div>
<div class="b" style="left:1110px;top:487.19px;width:1px;height:26.27px;background:#d9d9de;"></div>
<div class="b" style="left:1262px;top:487.19px;width:1px;height:26.27px;background:#d9d9de;"></div>
<div class="t" style="left:226.9px;top:490.325px;height:21px;line-height:21px;font-size:14px;color:#2d2e42;letter-spacing:-0.490px;">CN0000094</div>
<div class="t" style="left:367.9px;top:490.325px;height:21px;line-height:21px;font-size:14px;color:#2d2e42;letter-spacing:-0.579px;">HOP001</div>
<div class="t" style="left:521.1px;top:490.325px;height:21px;line-height:21px;font-size:14px;color:#2d2e42;letter-spacing:-0.156px;">Hope Works (Pty) Ltd</div>
<div class="t" style="left:956.6px;top:490.325px;height:21px;line-height:21px;font-size:14px;color:#2d2e42;letter-spacing:-0.126px;">Printed</div>
<div class="t" style="left:1115.1px;top:490.325px;height:21px;line-height:21px;font-size:14px;color:#2d2e42;letter-spacing:0.612px;">test</div>
<div class="t" style="left:1267.1px;top:490.325px;height:21px;line-height:21px;font-size:14px;color:#2d2e42;letter-spacing:-0.950px;">ZAR</div>
<div class="b" style="left:203px;top:513.46px;width:1141px;height:26.47px;background:#ebebeb;"></div>
<div class="b" style="left:203px;top:513.46px;width:19.5px;height:26.47px;background:#f3f3f5;"></div>
<div class="b" style="left:203px;top:538.73px;width:1141px;height:1px;background:#dddde2;"></div>
<div class="b" style="left:222px;top:513.46px;width:1px;height:26.27px;background:#d9d9de;"></div>
<div class="b" style="left:363px;top:513.46px;width:1px;height:26.27px;background:#d9d9de;"></div>
<div class="b" style="left:516.5px;top:513.46px;width:1px;height:26.27px;background:#d9d9de;"></div>
<div class="b" style="left:804px;top:513.46px;width:1px;height:26.27px;background:#d9d9de;"></div>
<div class="b" style="left:951.5px;top:513.46px;width:1px;height:26.27px;background:#d9d9de;"></div>
<div class="b" style="left:1110px;top:513.46px;width:1px;height:26.27px;background:#d9d9de;"></div>
<div class="b" style="left:1262px;top:513.46px;width:1px;height:26.27px;background:#d9d9de;"></div>
<div class="t" style="left:226.9px;top:516.595px;height:21px;line-height:21px;font-size:14px;color:#2d2e42;letter-spacing:-0.490px;">CN0000102</div>
<div class="t" style="left:367.9px;top:516.595px;height:21px;line-height:21px;font-size:14px;color:#2d2e42;letter-spacing:-0.579px;">HOP001</div>
<div class="t" style="left:521.1px;top:516.595px;height:21px;line-height:21px;font-size:14px;color:#2d2e42;letter-spacing:-0.156px;">Hope Works (Pty) Ltd</div>
<div class="t" style="left:956.6px;top:516.595px;height:21px;line-height:21px;font-size:14px;color:#2d2e42;letter-spacing:-0.126px;">Printed</div>
<div class="t" style="left:1115.1px;top:516.595px;height:21px;line-height:21px;font-size:14px;color:#2d2e42;letter-spacing:0.612px;">test</div>
<div class="t" style="left:1267.1px;top:516.595px;height:21px;line-height:21px;font-size:14px;color:#2d2e42;letter-spacing:-0.950px;">ZAR</div>
<div class="b" style="left:203px;top:539.73px;width:1141px;height:26.47px;background:#ebebeb;"></div>
<div class="b" style="left:203px;top:539.73px;width:19.5px;height:26.47px;background:#f3f3f5;"></div>
<div class="b" style="left:203px;top:565px;width:1141px;height:1px;background:#dddde2;"></div>
<div class="b" style="left:222px;top:539.73px;width:1px;height:26.27px;background:#d9d9de;"></div>
<div class="b" style="left:363px;top:539.73px;width:1px;height:26.27px;background:#d9d9de;"></div>
<div class="b" style="left:516.5px;top:539.73px;width:1px;height:26.27px;background:#d9d9de;"></div>
<div class="b" style="left:804px;top:539.73px;width:1px;height:26.27px;background:#d9d9de;"></div>
<div class="b" style="left:951.5px;top:539.73px;width:1px;height:26.27px;background:#d9d9de;"></div>
<div class="b" style="left:1110px;top:539.73px;width:1px;height:26.27px;background:#d9d9de;"></div>
<div class="b" style="left:1262px;top:539.73px;width:1px;height:26.27px;background:#d9d9de;"></div>
<div class="t" style="left:226.9px;top:542.865px;height:21px;line-height:21px;font-size:14px;color:#2d2e42;letter-spacing:-0.490px;">CN0000104</div>
<div class="t" style="left:367.9px;top:542.865px;height:21px;line-height:21px;font-size:14px;color:#2d2e42;letter-spacing:-0.579px;">HOP001</div>
<div class="t" style="left:521.1px;top:542.865px;height:21px;line-height:21px;font-size:14px;color:#2d2e42;letter-spacing:-0.156px;">Hope Works (Pty) Ltd</div>
<div class="t" style="left:956.6px;top:542.865px;height:21px;line-height:21px;font-size:14px;color:#2d2e42;letter-spacing:-0.126px;">Printed</div>
<div class="t" style="left:1115.1px;top:542.865px;height:21px;line-height:21px;font-size:14px;color:#2d2e42;letter-spacing:0.612px;">test</div>
<div class="t" style="left:1267.1px;top:542.865px;height:21px;line-height:21px;font-size:14px;color:#2d2e42;letter-spacing:-0.950px;">ZAR</div>
<div class="b" style="left:203px;top:566px;width:1141px;height:26.47px;background:#ebebeb;"></div>
<div class="b" style="left:203px;top:566px;width:19.5px;height:26.47px;background:#f3f3f5;"></div>
<div class="b" style="left:203px;top:591.27px;width:1141px;height:1px;background:#dddde2;"></div>
<div class="b" style="left:222px;top:566px;width:1px;height:26.27px;background:#d9d9de;"></div>
<div class="b" style="left:363px;top:566px;width:1px;height:26.27px;background:#d9d9de;"></div>
<div class="b" style="left:516.5px;top:566px;width:1px;height:26.27px;background:#d9d9de;"></div>
<div class="b" style="left:804px;top:566px;width:1px;height:26.27px;background:#d9d9de;"></div>
<div class="b" style="left:951.5px;top:566px;width:1px;height:26.27px;background:#d9d9de;"></div>
<div class="b" style="left:1110px;top:566px;width:1px;height:26.27px;background:#d9d9de;"></div>
<div class="b" style="left:1262px;top:566px;width:1px;height:26.27px;background:#d9d9de;"></div>
<div class="t" style="left:226.9px;top:569.135px;height:21px;line-height:21px;font-size:14px;color:#2d2e42;letter-spacing:-0.490px;">CN0000105</div>
<div class="t" style="left:367.9px;top:569.135px;height:21px;line-height:21px;font-size:14px;color:#2d2e42;letter-spacing:-0.579px;">HOP001</div>
<div class="t" style="left:521.1px;top:569.135px;height:21px;line-height:21px;font-size:14px;color:#2d2e42;letter-spacing:-0.156px;">Hope Works (Pty) Ltd</div>
<div class="t" style="left:956.6px;top:569.135px;height:21px;line-height:21px;font-size:14px;color:#2d2e42;letter-spacing:-0.126px;">Printed</div>
<div class="t" style="left:1115.1px;top:569.135px;height:21px;line-height:21px;font-size:14px;color:#2d2e42;letter-spacing:0.612px;">test</div>
<div class="t" style="left:1267.1px;top:569.135px;height:21px;line-height:21px;font-size:14px;color:#2d2e42;letter-spacing:-0.950px;">ZAR</div>
<div class="b" style="left:203px;top:592.27px;width:1141px;height:26.47px;background:#ebebeb;"></div>
<div class="b" style="left:203px;top:592.27px;width:19.5px;height:26.47px;background:#f3f3f5;"></div>
<div class="b" style="left:203px;top:617.54px;width:1141px;height:1px;background:#dddde2;"></div>
<div class="b" style="left:222px;top:592.27px;width:1px;height:26.27px;background:#d9d9de;"></div>
<div class="b" style="left:363px;top:592.27px;width:1px;height:26.27px;background:#d9d9de;"></div>
<div class="b" style="left:516.5px;top:592.27px;width:1px;height:26.27px;background:#d9d9de;"></div>
<div class="b" style="left:804px;top:592.27px;width:1px;height:26.27px;background:#d9d9de;"></div>
<div class="b" style="left:951.5px;top:592.27px;width:1px;height:26.27px;background:#d9d9de;"></div>
<div class="b" style="left:1110px;top:592.27px;width:1px;height:26.27px;background:#d9d9de;"></div>
<div class="b" style="left:1262px;top:592.27px;width:1px;height:26.27px;background:#d9d9de;"></div>
<div class="t" style="left:226.9px;top:595.405px;height:21px;line-height:21px;font-size:14px;color:#2d2e42;letter-spacing:-0.231px;">CN0000111</div>
<div class="t" style="left:367.9px;top:595.405px;height:21px;line-height:21px;font-size:14px;color:#2d2e42;letter-spacing:-0.579px;">HOP001</div>
<div class="t" style="left:521.1px;top:595.405px;height:21px;line-height:21px;font-size:14px;color:#2d2e42;letter-spacing:-0.156px;">Hope Works (Pty) Ltd</div>
<div class="t" style="left:956.6px;top:595.405px;height:21px;line-height:21px;font-size:14px;color:#2d2e42;letter-spacing:-0.126px;">Printed</div>
<div class="t" style="left:1115.1px;top:595.405px;height:21px;line-height:21px;font-size:14px;color:#2d2e42;letter-spacing:0.612px;">test</div>
<div class="t" style="left:1267.1px;top:595.405px;height:21px;line-height:21px;font-size:14px;color:#2d2e42;letter-spacing:-0.950px;">ZAR</div>
<div class="b" style="left:203px;top:618.54px;width:1141px;height:26.47px;background:#ebebeb;"></div>
<div class="b" style="left:203px;top:618.54px;width:19.5px;height:26.47px;background:#f3f3f5;"></div>
<div class="b" style="left:203px;top:643.81px;width:1141px;height:1px;background:#dddde2;"></div>
<div class="b" style="left:222px;top:618.54px;width:1px;height:26.27px;background:#d9d9de;"></div>
<div class="b" style="left:363px;top:618.54px;width:1px;height:26.27px;background:#d9d9de;"></div>
<div class="b" style="left:516.5px;top:618.54px;width:1px;height:26.27px;background:#d9d9de;"></div>
<div class="b" style="left:804px;top:618.54px;width:1px;height:26.27px;background:#d9d9de;"></div>
<div class="b" style="left:951.5px;top:618.54px;width:1px;height:26.27px;background:#d9d9de;"></div>
<div class="b" style="left:1110px;top:618.54px;width:1px;height:26.27px;background:#d9d9de;"></div>
<div class="b" style="left:1262px;top:618.54px;width:1px;height:26.27px;background:#d9d9de;"></div>
<div class="t" style="left:226.9px;top:621.675px;height:21px;line-height:21px;font-size:14px;color:#2d2e42;letter-spacing:-0.361px;">CN0000113</div>
<div class="t" style="left:367.9px;top:621.675px;height:21px;line-height:21px;font-size:14px;color:#2d2e42;letter-spacing:-0.579px;">HOP001</div>
<div class="t" style="left:521.1px;top:621.675px;height:21px;line-height:21px;font-size:14px;color:#2d2e42;letter-spacing:-0.156px;">Hope Works (Pty) Ltd</div>
<div class="t" style="left:956.6px;top:621.675px;height:21px;line-height:21px;font-size:14px;color:#2d2e42;letter-spacing:-0.126px;">Printed</div>
<div class="t" style="left:1115.1px;top:621.675px;height:21px;line-height:21px;font-size:14px;color:#2d2e42;letter-spacing:0.612px;">test</div>
<div class="t" style="left:1267.1px;top:621.675px;height:21px;line-height:21px;font-size:14px;color:#2d2e42;letter-spacing:-0.950px;">ZAR</div>
<div class="b" style="left:203px;top:644.81px;width:1141px;height:26.47px;background:#ebebeb;"></div>
<div class="b" style="left:203px;top:644.81px;width:19.5px;height:26.47px;background:#f3f3f5;"></div>
<div class="b" style="left:203px;top:670.08px;width:1141px;height:1px;background:#dddde2;"></div>
<div class="b" style="left:222px;top:644.81px;width:1px;height:26.27px;background:#d9d9de;"></div>
<div class="b" style="left:363px;top:644.81px;width:1px;height:26.27px;background:#d9d9de;"></div>
<div class="b" style="left:516.5px;top:644.81px;width:1px;height:26.27px;background:#d9d9de;"></div>
<div class="b" style="left:804px;top:644.81px;width:1px;height:26.27px;background:#d9d9de;"></div>
<div class="b" style="left:951.5px;top:644.81px;width:1px;height:26.27px;background:#d9d9de;"></div>
<div class="b" style="left:1110px;top:644.81px;width:1px;height:26.27px;background:#d9d9de;"></div>
<div class="b" style="left:1262px;top:644.81px;width:1px;height:26.27px;background:#d9d9de;"></div>
<div class="t" style="left:226.9px;top:647.945px;height:21px;line-height:21px;font-size:14px;color:#2d2e42;letter-spacing:-0.361px;">CN0000119</div>
<div class="t" style="left:367.9px;top:647.945px;height:21px;line-height:21px;font-size:14px;color:#2d2e42;letter-spacing:-0.579px;">HOP001</div>
<div class="t" style="left:521.1px;top:647.945px;height:21px;line-height:21px;font-size:14px;color:#2d2e42;letter-spacing:-0.156px;">Hope Works (Pty) Ltd</div>
<div class="t" style="left:956.6px;top:647.945px;height:21px;line-height:21px;font-size:14px;color:#2d2e42;letter-spacing:-0.126px;">Printed</div>
<div class="t" style="left:1115.1px;top:647.945px;height:21px;line-height:21px;font-size:14px;color:#2d2e42;letter-spacing:0.612px;">test</div>
<div class="t" style="left:1267.1px;top:647.945px;height:21px;line-height:21px;font-size:14px;color:#2d2e42;letter-spacing:-0.950px;">ZAR</div>
<div class="b" style="left:203px;top:671.08px;width:1141px;height:26.47px;background:#ebebeb;"></div>
<div class="b" style="left:203px;top:671.08px;width:19.5px;height:26.47px;background:#f3f3f5;"></div>
<div class="b" style="left:203px;top:696.35px;width:1141px;height:1px;background:#dddde2;"></div>
<div class="b" style="left:222px;top:671.08px;width:1px;height:26.27px;background:#d9d9de;"></div>
<div class="b" style="left:363px;top:671.08px;width:1px;height:26.27px;background:#d9d9de;"></div>
<div class="b" style="left:516.5px;top:671.08px;width:1px;height:26.27px;background:#d9d9de;"></div>
<div class="b" style="left:804px;top:671.08px;width:1px;height:26.27px;background:#d9d9de;"></div>
<div class="b" style="left:951.5px;top:671.08px;width:1px;height:26.27px;background:#d9d9de;"></div>
<div class="b" style="left:1110px;top:671.08px;width:1px;height:26.27px;background:#d9d9de;"></div>
<div class="b" style="left:1262px;top:671.08px;width:1px;height:26.27px;background:#d9d9de;"></div>
<div class="t" style="left:226.9px;top:674.215px;height:21px;line-height:21px;font-size:14px;color:#2d2e42;letter-spacing:-0.490px;">CN0000120</div>
<div class="t" style="left:367.9px;top:674.215px;height:21px;line-height:21px;font-size:14px;color:#2d2e42;letter-spacing:-0.579px;">HOP001</div>
<div class="t" style="left:521.1px;top:674.215px;height:21px;line-height:21px;font-size:14px;color:#2d2e42;letter-spacing:-0.156px;">Hope Works (Pty) Ltd</div>
<div class="t" style="left:956.6px;top:674.215px;height:21px;line-height:21px;font-size:14px;color:#2d2e42;letter-spacing:-0.126px;">Printed</div>
<div class="t" style="left:1115.1px;top:674.215px;height:21px;line-height:21px;font-size:14px;color:#2d2e42;letter-spacing:0.485px;">1234</div>
<div class="t" style="left:1267.1px;top:674.215px;height:21px;line-height:21px;font-size:14px;color:#2d2e42;letter-spacing:-0.950px;">ZAR</div>
<div class="b" style="left:203px;top:697.35px;width:1141px;height:26.47px;background:#ebebeb;"></div>
<div class="b" style="left:203px;top:697.35px;width:19.5px;height:26.47px;background:#f3f3f5;"></div>
<div class="b" style="left:203px;top:722.62px;width:1141px;height:1px;background:#dddde2;"></div>
<div class="b" style="left:222px;top:697.35px;width:1px;height:26.27px;background:#d9d9de;"></div>
<div class="b" style="left:363px;top:697.35px;width:1px;height:26.27px;background:#d9d9de;"></div>
<div class="b" style="left:516.5px;top:697.35px;width:1px;height:26.27px;background:#d9d9de;"></div>
<div class="b" style="left:804px;top:697.35px;width:1px;height:26.27px;background:#d9d9de;"></div>
<div class="b" style="left:951.5px;top:697.35px;width:1px;height:26.27px;background:#d9d9de;"></div>
<div class="b" style="left:1110px;top:697.35px;width:1px;height:26.27px;background:#d9d9de;"></div>
<div class="b" style="left:1262px;top:697.35px;width:1px;height:26.27px;background:#d9d9de;"></div>
<div class="t" style="left:226.9px;top:700.485px;height:21px;line-height:21px;font-size:14px;color:#2d2e42;letter-spacing:-0.490px;">CN0000136</div>
<div class="t" style="left:367.9px;top:700.485px;height:21px;line-height:21px;font-size:14px;color:#2d2e42;letter-spacing:-0.579px;">HOP001</div>
<div class="t" style="left:521.1px;top:700.485px;height:21px;line-height:21px;font-size:14px;color:#2d2e42;letter-spacing:-0.156px;">Hope Works (Pty) Ltd</div>
<div class="t" style="left:956.6px;top:700.485px;height:21px;line-height:21px;font-size:14px;color:#2d2e42;letter-spacing:-0.126px;">Printed</div>
<div class="t" style="left:1115.1px;top:700.485px;height:21px;line-height:21px;font-size:14px;color:#2d2e42;letter-spacing:0.612px;">test</div>
<div class="t" style="left:1267.1px;top:700.485px;height:21px;line-height:21px;font-size:14px;color:#2d2e42;letter-spacing:-0.950px;">ZAR</div>
<div class="b" style="left:203px;top:723.62px;width:1141px;height:26.47px;background:#ebebeb;"></div>
<div class="b" style="left:203px;top:723.62px;width:19.5px;height:26.47px;background:#f3f3f5;"></div>
<div class="b" style="left:203px;top:748.89px;width:1141px;height:1px;background:#dddde2;"></div>
<div class="b" style="left:222px;top:723.62px;width:1px;height:26.27px;background:#d9d9de;"></div>
<div class="b" style="left:363px;top:723.62px;width:1px;height:26.27px;background:#d9d9de;"></div>
<div class="b" style="left:516.5px;top:723.62px;width:1px;height:26.27px;background:#d9d9de;"></div>
<div class="b" style="left:804px;top:723.62px;width:1px;height:26.27px;background:#d9d9de;"></div>
<div class="b" style="left:951.5px;top:723.62px;width:1px;height:26.27px;background:#d9d9de;"></div>
<div class="b" style="left:1110px;top:723.62px;width:1px;height:26.27px;background:#d9d9de;"></div>
<div class="b" style="left:1262px;top:723.62px;width:1px;height:26.27px;background:#d9d9de;"></div>
<div class="t" style="left:226.9px;top:726.755px;height:21px;line-height:21px;font-size:14px;color:#2d2e42;letter-spacing:-0.490px;">CN0000138</div>
<div class="t" style="left:367.9px;top:726.755px;height:21px;line-height:21px;font-size:14px;color:#2d2e42;letter-spacing:-0.579px;">HOP001</div>
<div class="t" style="left:521.1px;top:726.755px;height:21px;line-height:21px;font-size:14px;color:#2d2e42;letter-spacing:-0.156px;">Hope Works (Pty) Ltd</div>
<div class="t" style="left:956.6px;top:726.755px;height:21px;line-height:21px;font-size:14px;color:#2d2e42;letter-spacing:-0.126px;">Printed</div>
<div class="t" style="left:1115.1px;top:726.755px;height:21px;line-height:21px;font-size:14px;color:#2d2e42;letter-spacing:0.612px;">test</div>
<div class="t" style="left:1267.1px;top:726.755px;height:21px;line-height:21px;font-size:14px;color:#2d2e42;letter-spacing:-0.950px;">ZAR</div>
<div class="b" style="left:203px;top:749.89px;width:1141px;height:26.47px;background:#ebebeb;"></div>
<div class="b" style="left:203px;top:749.89px;width:19.5px;height:26.47px;background:#f3f3f5;"></div>
<div class="b" style="left:203px;top:775.16px;width:1141px;height:1px;background:#dddde2;"></div>
<div class="b" style="left:222px;top:749.89px;width:1px;height:26.27px;background:#d9d9de;"></div>
<div class="b" style="left:363px;top:749.89px;width:1px;height:26.27px;background:#d9d9de;"></div>
<div class="b" style="left:516.5px;top:749.89px;width:1px;height:26.27px;background:#d9d9de;"></div>
<div class="b" style="left:804px;top:749.89px;width:1px;height:26.27px;background:#d9d9de;"></div>
<div class="b" style="left:951.5px;top:749.89px;width:1px;height:26.27px;background:#d9d9de;"></div>
<div class="b" style="left:1110px;top:749.89px;width:1px;height:26.27px;background:#d9d9de;"></div>
<div class="b" style="left:1262px;top:749.89px;width:1px;height:26.27px;background:#d9d9de;"></div>
<div class="t" style="left:226.9px;top:753.025px;height:21px;line-height:21px;font-size:14px;color:#2d2e42;letter-spacing:-0.490px;">CN0000139</div>
<div class="t" style="left:367.9px;top:753.025px;height:21px;line-height:21px;font-size:14px;color:#2d2e42;letter-spacing:-0.579px;">HOP001</div>
<div class="t" style="left:521.1px;top:753.025px;height:21px;line-height:21px;font-size:14px;color:#2d2e42;letter-spacing:-0.156px;">Hope Works (Pty) Ltd</div>
<div class="t" style="left:956.6px;top:753.025px;height:21px;line-height:21px;font-size:14px;color:#2d2e42;letter-spacing:-0.126px;">Printed</div>
<div class="t" style="left:1115.1px;top:753.025px;height:21px;line-height:21px;font-size:14px;color:#2d2e42;letter-spacing:0.612px;">test</div>
<div class="t" style="left:1267.1px;top:753.025px;height:21px;line-height:21px;font-size:14px;color:#2d2e42;letter-spacing:-0.950px;">ZAR</div>
<div class="b" style="left:203px;top:776.16px;width:1141px;height:26.47px;background:#90ee90;"></div>
<div class="b" style="left:203px;top:776.16px;width:19.5px;height:26.47px;background:#f3f3f5;"></div>
<div class="b" style="left:222px;top:776.16px;width:1px;height:26.27px;background:#d9d9de;"></div>
<div class="b" style="left:363px;top:776.16px;width:1px;height:26.27px;background:#b5e8b5;"></div>
<div class="b" style="left:516.5px;top:776.16px;width:1px;height:26.27px;background:#b5e8b5;"></div>
<div class="b" style="left:804px;top:776.16px;width:1px;height:26.27px;background:#b5e8b5;"></div>
<div class="b" style="left:951.5px;top:776.16px;width:1px;height:26.27px;background:#b5e8b5;"></div>
<div class="b" style="left:1110px;top:776.16px;width:1px;height:26.27px;background:#b5e8b5;"></div>
<div class="b" style="left:1262px;top:776.16px;width:1px;height:26.27px;background:#b5e8b5;"></div>
<div class="t" style="left:226.9px;top:779.295px;height:21px;line-height:21px;font-size:14px;color:#2d2e42;letter-spacing:-0.490px;">CN0000148</div>
<div class="t" style="left:367.9px;top:779.295px;height:21px;line-height:21px;font-size:14px;color:#2d2e42;letter-spacing:-0.579px;">HOP001</div>
<div class="t" style="left:521.1px;top:779.295px;height:21px;line-height:21px;font-size:14px;color:#2d2e42;letter-spacing:-0.156px;">Hope Works (Pty) Ltd</div>
<div class="t" style="left:956.6px;top:779.295px;height:21px;line-height:21px;font-size:14px;color:#2d2e42;letter-spacing:-0.126px;">Printed</div>
<div class="t" style="left:1115.1px;top:779.295px;height:21px;line-height:21px;font-size:14px;color:#2d2e42;letter-spacing:-0.271px;">HW200</div>
<div class="t" style="left:1267.1px;top:779.295px;height:21px;line-height:21px;font-size:14px;color:#2d2e42;letter-spacing:-0.950px;">ZAR</div>
<div class="b" style="left:203px;top:802.43px;width:1141px;height:10.57px;background:#fff;"></div>
<svg style="left:210px;top:784.795px" width="5" height="9" viewBox="0 0 5 9"><polygon points="0,0 5,4.500 0,9" fill="#1e1e28"/></svg>
<div class="b" style="left:203px;top:812.5px;width:1163px;height:1px;background:#cdced5;"></div>
<div class="b" style="left:203px;top:813.5px;width:1163px;height:37px;background:linear-gradient(90deg,#e9e9ed,#e5e5ea 40%,#e7e7eb);"></div>
<div class="b" style="left:203px;top:850px;width:1163px;height:21.5px;background:#f5f5f7;"></div>
<svg style="left:210px;top:856.500px" width="5" height="9" viewBox="0 0 5 9"><polygon points="5,0 0,4.500 5,9" fill="#858695"/></svg>
<svg style="left:1352.500px;top:856.500px" width="5" height="9" viewBox="0 0 5 9"><polygon points="0,0 5,4.500 0,9" fill="#858695"/></svg>
<div class="b" style="left:224.5px;top:856.3px;width:531px;height:9.4px;border:1px solid #a9aab6;border-radius:4.700px;background:linear-gradient(#d6d7de,#efeff3 55%,#dfe0e6);"></div>
<div class="b" style="left:203px;top:871.5px;width:1163px;height:1px;background:#cdced5;"></div>
<div class="b" style="left:203px;top:872.5px;width:1163px;height:30.5px;background:linear-gradient(90deg,#eeeef1,#ececf0);"></div>
<svg style="left:211px;top:883px" width="13" height="11" viewBox="0 0 13 11"><path d="M1.500,1.500 L11.500,9.500 M11.500,1.500 L1.500,9.500" stroke="#1e1e28" stroke-width="2.800" fill="none"/></svg>
<div class="b" style="left:233px;top:880.5px;width:15.5px;height:15px;background:#ebebef;border:1px solid #a3a4ae;"></div>
<svg style="left:234px;top:877px" width="17" height="18" viewBox="0 0 17 18"><path d="M2,9 L6.500,15.500 L15,1.500" fill="none" stroke="#2a2b3a" stroke-width="2.100"/></svg>
<div class="t" style="left:253.1px;top:878px;height:21px;line-height:21px;font-size:14px;color:#2d2e42;letter-spacing:-0.238px;">Contains([CustomerName], 'Hope')</div>
<div class="t" style="left:1300.3px;top:878.8px;height:21px;line-height:21px;font-size:14px;color:#2d2e42;letter-spacing:-0.202px;">Edit Filter</div>
<div class="b" style="left:496px;top:405px;width:481px;height:206px;background:#fff;border:1px solid #3c8ad0;"></div>
<div class="b" style="left:497px;top:549px;width:479px;height:61px;background:#f0f0f0;"></div>
<div class="t" style="left:506.9px;top:414.1px;height:22px;line-height:22px;font-size:14.7px;color:#0c0c0c;letter-spacing:-0.174px;">Print Queue Processing</div>
<svg style="left:950.100px;top:417.900px" width="11.800" height="11.800" viewBox="0 0 13 13"><path d="M0.500,0.500 L12.500,12.500 M12.500,0.500 L0.500,12.500" stroke="#1a1a1a" stroke-width="1.200" fill="none"/></svg>
<svg style="left:529px;top:477px" width="39" height="39" viewBox="0 0 39 39"><circle cx="19.300" cy="19.200" r="18.800" fill="#0a78d4"/><circle cx="19.200" cy="9.700" r="1.550" fill="#fff"/><rect x="18" y="13.600" width="2.400" height="16.800" fill="#fff"/></svg>
<div class="t" style="left:578.8px;top:485.5px;height:22px;line-height:22px;font-size:15.2px;color:#0c0c0c;letter-spacing:-0.204px;">The selected items have been sent to the print queue.</div>
<div class="b" style="left:844.7px;top:565px;width:107.5px;height:30px;background:#e1e1e1;border:2.400px solid #1473cc;"></div>
<div class="t" style="left:888.3px;top:569.3px;height:21px;line-height:21px;font-size:14.6px;color:#0c0c0c;letter-spacing:0.805px;">OK</div>
<svg style="left:0;top:0" width="1371" height="943" viewBox="0 0 1371 943">
<path d="M843,423.700 H680" stroke="#4169e1" stroke-width="3.300" fill="none"/>
<polygon points="664.800,423.700 682.300,416.600 682.300,430.800" fill="#4169e1"/>
<path d="M838,432.800 L722,479.500" stroke="#4a68d4" stroke-width="1.200" stroke-dasharray="5.500,9.400" fill="none"/>
<polygon points="708,485.900 720.800,474.400 716,482.800 725.300,485.500" fill="#10173f"/>
<circle cx="855.800" cy="423.900" r="13.800" fill="#4169e1"/>
<path d="M625,580.800 H824" stroke="#4169e1" stroke-width="3.300" fill="none"/>
<polygon points="839.600,580.700 822.300,573.600 822.300,587.800" fill="#4169e1"/>
<circle cx="612" cy="581.500" r="13.800" fill="#4169e1"/>
<text x="855.800" y="428.600" font-family="Liberation Mono,monospace" font-size="14.500" font-weight="bold" fill="#0c0c14" text-anchor="middle">1</text>
<text x="612" y="586.400" font-family="Liberation Mono,monospace" font-size="14.500" fill="#0c0c14" text-anchor="middle">2</text>
</svg>
</body></html>
